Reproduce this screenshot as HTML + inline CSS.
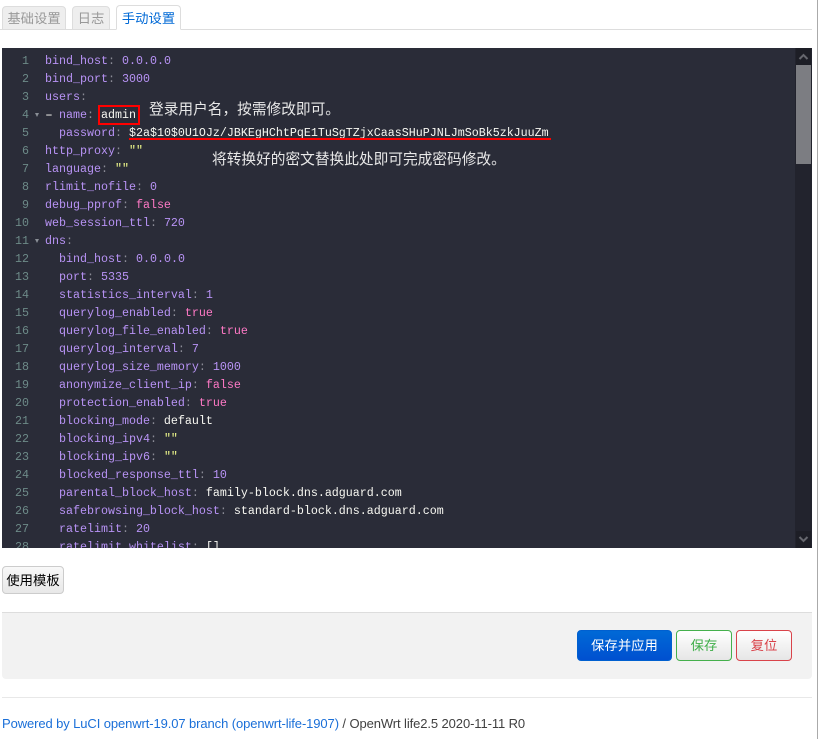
<!DOCTYPE html>
<html lang="zh"><head><meta charset="utf-8"><title>手动设置</title>
<style>
*{box-sizing:border-box}
html,body{margin:0;padding:0;background:#fff;width:818px;height:739px;overflow:hidden}
body{position:relative;font-family:"Liberation Sans","Noto Sans CJK SC",sans-serif;font-size:13.33px}
.abs,.tab,.btn{position:absolute}
.tab{top:6px;height:24px;border:1px solid #ddd;border-bottom:1px solid #ddd;border-radius:4px 4px 0 0;background:#eee;color:#999;font-size:13.33px;line-height:23px;text-align:center}
.tab.on{top:5px;height:25px;background:#fff;border-bottom-color:#fff;color:#0069d6;line-height:25px;z-index:2}
#ed{left:2px;top:48px;width:810px;height:500px;background:#2a2c38;overflow:hidden}
.ln{position:absolute;left:0;width:27px;text-align:right;color:#6d8a88;font:11.67px/18px "Liberation Mono",monospace}
.c{position:absolute;left:43px;white-space:pre;color:#f8f8f2;font:11.67px/18px "Liberation Mono",monospace}
.k{color:#b893f5}.n{color:#b893f5}.b{color:#ff79c6}.s{color:#f1fa8c}.d{color:#8a8c96}
.dash{display:inline-block;width:7px;transform:translateX(-2px) scaleX(1.7);transform-origin:0 50%}
.fold{position:absolute;left:33px;width:0;height:0;border-left:2.5px solid transparent;border-right:2.5px solid transparent;border-top:4px solid #8a8f96}
.btn{border-radius:4px;font-size:13.33px;text-align:center}
.note{position:absolute;color:#e8e8e8;font-size:14.7px;line-height:20px;white-space:nowrap;font-family:"Liberation Sans","Noto Sans CJK SC",sans-serif}
</style></head><body>
<div class="abs" style="left:0;top:29px;width:812px;height:1px;background:#ddd"></div>
<div class="tab" style="left:2px;width:64px">基础设置</div>
<div class="tab" style="left:72px;width:38px">日志</div>
<div class="tab on" style="left:116px;width:65px">手动设置</div>

<div id="ed" class="abs">
<div class="ln" style="top:4px">1</div><div class="c" style="top:4px"><span class="k">bind_host</span><span class="d">:</span> <span class="n">0.0.0.0</span></div>
<div class="ln" style="top:22px">2</div><div class="c" style="top:22px"><span class="k">bind_port</span><span class="d">:</span> <span class="n">3000</span></div>
<div class="ln" style="top:40px">3</div><div class="c" style="top:40px"><span class="k">users</span><span class="d">:</span></div>
<div class="ln" style="top:58px">4</div><div class="fold" style="top:65px"></div><div class="c" style="top:58px"><span class="dash">-</span> <span class="k">name</span><span class="d">:</span> admin</div>
<div class="ln" style="top:76px">5</div><div class="c" style="top:76px">  <span class="k">password</span><span class="d">:</span> $2a$10$0U1OJz/JBKEgHChtPqE1TuSgTZjxCaasSHuPJNLJmSoBk5zkJuuZm</div>
<div class="ln" style="top:94px">6</div><div class="c" style="top:94px"><span class="k">http_proxy</span><span class="d">:</span> <span class="s">""</span></div>
<div class="ln" style="top:112px">7</div><div class="c" style="top:112px"><span class="k">language</span><span class="d">:</span> <span class="s">""</span></div>
<div class="ln" style="top:130px">8</div><div class="c" style="top:130px"><span class="k">rlimit_nofile</span><span class="d">:</span> <span class="n">0</span></div>
<div class="ln" style="top:148px">9</div><div class="c" style="top:148px"><span class="k">debug_pprof</span><span class="d">:</span> <span class="b">false</span></div>
<div class="ln" style="top:166px">10</div><div class="c" style="top:166px"><span class="k">web_session_ttl</span><span class="d">:</span> <span class="n">720</span></div>
<div class="ln" style="top:184px">11</div><div class="fold" style="top:191px"></div><div class="c" style="top:184px"><span class="k">dns</span><span class="d">:</span></div>
<div class="ln" style="top:202px">12</div><div class="c" style="top:202px">  <span class="k">bind_host</span><span class="d">:</span> <span class="n">0.0.0.0</span></div>
<div class="ln" style="top:220px">13</div><div class="c" style="top:220px">  <span class="k">port</span><span class="d">:</span> <span class="n">5335</span></div>
<div class="ln" style="top:238px">14</div><div class="c" style="top:238px">  <span class="k">statistics_interval</span><span class="d">:</span> <span class="n">1</span></div>
<div class="ln" style="top:256px">15</div><div class="c" style="top:256px">  <span class="k">querylog_enabled</span><span class="d">:</span> <span class="b">true</span></div>
<div class="ln" style="top:274px">16</div><div class="c" style="top:274px">  <span class="k">querylog_file_enabled</span><span class="d">:</span> <span class="b">true</span></div>
<div class="ln" style="top:292px">17</div><div class="c" style="top:292px">  <span class="k">querylog_interval</span><span class="d">:</span> <span class="n">7</span></div>
<div class="ln" style="top:310px">18</div><div class="c" style="top:310px">  <span class="k">querylog_size_memory</span><span class="d">:</span> <span class="n">1000</span></div>
<div class="ln" style="top:328px">19</div><div class="c" style="top:328px">  <span class="k">anonymize_client_ip</span><span class="d">:</span> <span class="b">false</span></div>
<div class="ln" style="top:346px">20</div><div class="c" style="top:346px">  <span class="k">protection_enabled</span><span class="d">:</span> <span class="b">true</span></div>
<div class="ln" style="top:364px">21</div><div class="c" style="top:364px">  <span class="k">blocking_mode</span><span class="d">:</span> default</div>
<div class="ln" style="top:382px">22</div><div class="c" style="top:382px">  <span class="k">blocking_ipv4</span><span class="d">:</span> <span class="s">""</span></div>
<div class="ln" style="top:400px">23</div><div class="c" style="top:400px">  <span class="k">blocking_ipv6</span><span class="d">:</span> <span class="s">""</span></div>
<div class="ln" style="top:418px">24</div><div class="c" style="top:418px">  <span class="k">blocked_response_ttl</span><span class="d">:</span> <span class="n">10</span></div>
<div class="ln" style="top:436px">25</div><div class="c" style="top:436px">  <span class="k">parental_block_host</span><span class="d">:</span> family-block.dns.adguard.com</div>
<div class="ln" style="top:454px">26</div><div class="c" style="top:454px">  <span class="k">safebrowsing_block_host</span><span class="d">:</span> standard-block.dns.adguard.com</div>
<div class="ln" style="top:472px">27</div><div class="c" style="top:472px">  <span class="k">ratelimit</span><span class="d">:</span> <span class="n">20</span></div>
<div class="ln" style="top:490px">28</div><div class="c" style="top:490px">  <span class="k">ratelimit_whitelist</span><span class="d">:</span> []</div>

<div class="abs" style="left:793px;top:0;width:17px;height:500px;background:#22232d"></div>
<div class="abs" style="left:794px;top:0;width:15px;height:17px;background:#1d1e26"></div>
<div class="abs" style="left:794px;top:483px;width:15px;height:17px;background:#1d1e26"></div>
<div class="abs" style="left:794px;top:17px;width:15px;height:99px;background:#7c7d82"></div>
<svg class="abs" style="left:794px;top:0" width="15" height="17"><path d="M3.5 11 L7.5 7 L11.5 11" fill="none" stroke="#66676e" stroke-width="2"/></svg>
<svg class="abs" style="left:794px;top:483px" width="15" height="17"><path d="M3.5 6 L7.5 10 L11.5 6" fill="none" stroke="#66676e" stroke-width="2"/></svg>
</div>

<div class="abs" style="left:98px;top:105px;width:42px;height:20px;border:2px solid #f00"></div>
<div class="abs" style="left:129px;top:138px;width:422px;height:2px;background:#f00"></div>
<div class="note" style="left:149px;top:100px">登录用户名，按需修改即可。</div>
<div class="note" style="left:212px;top:150px">将转换好的密文替换此处即可完成密码修改。</div>

<div class="btn" style="left:2px;top:566px;width:62px;height:28px;border:1px solid #ccc;background:linear-gradient(#f8f8f8,#e8e8e8);color:#000;line-height:27px">使用模板</div>

<div class="abs" style="left:2px;top:612px;width:810px;height:67px;background:#f2f2f2;border-top:1px solid #ddd;border-radius:0 0 4px 4px"></div>
<div class="btn" style="left:577px;top:630px;width:95px;height:31px;background:linear-gradient(#0069d6,#0050d0);color:#fff;border:1px solid #0060d0;line-height:29px">保存并应用</div>
<div class="btn" style="left:676px;top:630px;width:56px;height:31px;background:linear-gradient(#fff,#e6e6e6);color:#3fae49;border:1px solid #44b04c;line-height:29px">保存</div>
<div class="btn" style="left:736px;top:630px;width:56px;height:31px;background:linear-gradient(#fff,#e6e6e6);color:#d9434a;border:1px solid #d9434a;line-height:29px">复位</div>

<div class="abs" style="left:2px;top:697px;width:810px;height:1px;background:#e8e8e8"></div>
<div class="abs" style="left:2px;top:715px;white-space:nowrap;font-size:13px;letter-spacing:-0.1px;line-height:18px;color:#404040"><span style="color:#1a6fd8">Powered by LuCI openwrt-19.07 branch (openwrt-life-1907)</span> / OpenWrt life2.5 2020-11-11 R0</div>

<div class="abs" style="left:817px;top:0;width:1px;height:739px;background:#aaa"></div>
</body></html>
